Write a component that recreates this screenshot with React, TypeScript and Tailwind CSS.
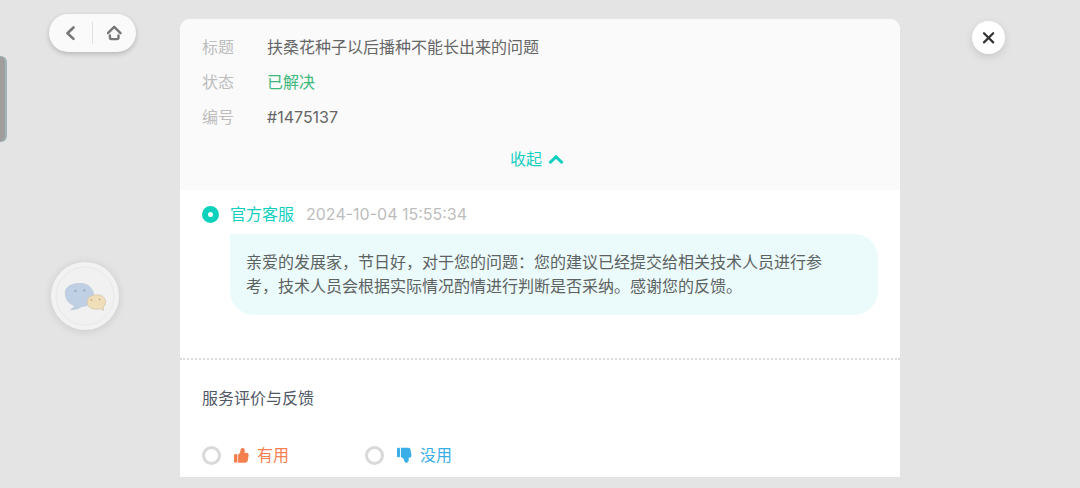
import { useState } from "react";

const ticket = {
  title: "扶桑花种子以后播种不能长出来的问题",
  status: "已解决",
  id: "#1475137",
};

function Row({ label, value, tone }: { label: string; value: string; tone: string }) {
  return (
    <div className="flex h-[35px] items-center">
      <dt className="w-[65px] shrink-0 text-[#bdbdbd]">{label}</dt>
      <dd className={tone}>{value}</dd>
    </div>
  );
}

function ThumbUpIcon() {
  return (
    <svg viewBox="0 0 16 16" className="size-4" fill="currentColor" aria-hidden="true">
      <rect x="1" y="7" width="3.400" height="8.800" rx="1.400" />
      <path d="M5.100 7.600C6.700 6.600 7.300 5 7.600 3 7.900 1.400 9 .8 10.100 1.100c1.400.4 2 1.600 1.700 3l-.3 1.600h1.900c1.500 0 2.400 1.100 2.200 2.500l-.7 4.900c-.2 1.600-1.300 2.700-2.900 2.700H5.100z" />
    </svg>
  );
}

function ThumbDownIcon() {
  return (
    <svg viewBox="0 0 16 16" className="size-4" fill="currentColor" aria-hidden="true">
      <rect x="1" y="0.800" width="3" height="9.400" rx="1" />
      <path d="M4.900.8h7.400c1.200 0 2 .7 2.200 1.800l.9 5.600c.2 1.400-.6 2.400-1.900 2.500l-.8.1v2.500c0 1.500-.9 2.400-2.300 2.400-1.300 0-2.100-.8-2.200-2.100C8.100 12.200 7.300 11 4.900 10.300z" />
    </svg>
  );
}

function Choice({ value, label, tone, down, checked, onChange }: {
  value: string;
  label: string;
  tone: string;
  down?: boolean;
  checked: boolean;
  onChange: (value: string) => void;
}) {
  return (
    <label className="flex w-[163px] cursor-pointer items-center">
      <input
        type="radio"
        name="rating"
        value={value}
        checked={checked}
        onChange={() => onChange(value)}
        className="size-[19px] appearance-none rounded-full border-3 border-[#d9d9d9] bg-white checked:border-[#0bd1bd]"
      />
      <span className={`ml-3 flex items-center gap-2 ${tone}`}>
        {down ? <ThumbDownIcon /> : <ThumbUpIcon />}
        {label}
      </span>
    </label>
  );
}

export default function App() {
  const [open, setOpen] = useState(true);
  const [rating, setRating] = useState("");

  return (
    <div className="relative grid min-h-screen grid-cols-[1fr_4fr_1fr] bg-[#e4e4e4] font-['Inter','Noto_Sans_CJK_SC',sans-serif] text-base leading-6 text-[#666]">
      <div className="absolute top-14 left-0 h-[86px] w-[7px] rounded-r-md border-y border-r-2 border-[#9fb4b8] bg-[#a09d9d]" />

      <aside className="flex flex-col items-start pt-[14px]">
        <nav className="ml-[49px] flex h-[38px] items-center rounded-full bg-[#fafafa] shadow-[0_2px_5px_rgba(0,0,0,0.2)]">
          <button type="button" aria-label="返回" className="flex h-full w-[43px] items-center justify-center">
            <svg viewBox="0 0 16 16" className="size-4" fill="none" stroke="#777" strokeWidth="2.600" strokeLinecap="round" strokeLinejoin="round">
              <path d="M10.500 2.500 4.500 8.200l6 5.700" />
            </svg>
          </button>
          <span className="h-[22px] w-px bg-[#e0e0e0]" />
          <button type="button" aria-label="主页" className="flex h-full w-[43px] items-center justify-center">
            <svg viewBox="0 0 16 16" className="size-4" fill="none" stroke="#777" strokeWidth="2.400" strokeLinecap="round" strokeLinejoin="round">
              <path d="M.9 8.200 7.200 1.800 13.500 8.200" />
              <path d="M2.900 10.500v2q0 1.600 1.600 1.600h5.400q1.600 0 1.600-1.600v-2" />
            </svg>
          </button>
        </nav>
        <button type="button" aria-label="消息" className="mt-[210px] ml-[51px] flex size-[68px] items-center justify-center rounded-full bg-[#f2f2f2] shadow-[0_1px_8px_rgba(0,0,0,0.12)]">
          <svg viewBox="0 0 60 60" className="size-[60px]" aria-hidden="true">
            <circle cx="30" cy="30" r="29" fill="#f1f1f1" stroke="#e8e8e8" />
            <path d="M23.500 17.500C32 16.500 39 22 38.500 30c-.4 6.500-5.500 10.500-12 10.500-2.600 2.200-6.500 3.200-11 3.300 2-1.200 3.500-2.600 4.200-4.300C13.500 38 10.200 33 10.300 26.500c.2-6 6.200-8.500 13.200-9z" fill="#c0d0e4" stroke="#b6c6d8" strokeWidth=".7" />
            <path d="M41.500 28.800c5.600-.2 9.300 3.200 9 7.600-.2 2-.9 3.500-2.300 4.600l.5 3.500-3.200-1.700c-7 1.600-13.200-.8-13.400-6.500-.1-4.400 3.800-7.300 9.400-7.500z" fill="#f0deb9" stroke="#cfc3ad" strokeWidth=".7" />
            <g fill="#9bb4bd">
              <circle cx="20.500" cy="25" r="1.300" />
              <circle cx="29.300" cy="24.500" r="1.300" />
            </g>
            <g fill="#c3b796">
              <circle cx="36.500" cy="34" r="1.100" />
              <circle cx="44.500" cy="33.500" r="1.100" />
            </g>
          </svg>
        </button>
      </aside>

      <main className="mt-[19px] mb-[11px] overflow-hidden rounded-t-[10px] bg-white">
        <header className="bg-[#fafafa] px-[22px] pt-[10px] pb-[19px]">
          {open && (
            <dl>
              <Row label="标题" value={ticket.title} tone="text-[#666]" />
              <Row label="状态" value={ticket.status} tone="text-[#3cb87a]" />
              <Row label="编号" value={ticket.id} tone="text-[#666]" />
            </dl>
          )}
          <button type="button" onClick={() => setOpen(!open)} className="mx-auto mt-[13px] flex items-center gap-1.5 pr-1.5 text-[#11cfc0]">
            {open ? "收起" : "展开"}
            <svg viewBox="0 0 16 10" className={open ? "h-[10px] w-4" : "h-[10px] w-4 rotate-180"} fill="none" stroke="currentColor" strokeWidth="3" aria-hidden="true">
              <path d="M1.500 9 8 2.800 14.500 9" />
            </svg>
          </button>
        </header>

        <section className="px-[22px] pt-3 pb-[43px]">
          <div className="flex items-center">
            <span className="size-[17px] rounded-full border-6 border-[#0bd1bd] bg-white" />
            <h2 className="ml-[11px] text-[#11cfc0]">官方客服</h2>
            <time dateTime="2024-10-04T15:55:34" className="ml-3 text-[#bdbdbd]">2024-10-04 15:55:34</time>
          </div>
          <p className="mt-2 ml-7 rounded-[24px] rounded-tl-none bg-[#ebfafa] pt-4 pr-12 pb-[17px] pl-4 text-[#5c6262]">
            亲爱的发展家，节日好，对于您的问题：您的建议已经提交给相关技术人员进行参考，技术人员会根据实际情况酌情进行判断是否采纳。感谢您的反馈。
          </p>
        </section>

        <fieldset aria-labelledby="feedback" className="min-w-0 border-t-2 border-dotted border-[#dcdcdc] px-[22px] pb-[9px]">
          <h2 id="feedback" className="mt-[26px] text-[#505866]">服务评价与反馈</h2>
          <div className="mt-[33px] flex">
            <Choice value="useful" label="有用" tone="text-[#f5804f]" checked={rating === "useful"} onChange={setRating} />
            <Choice value="useless" label="没用" tone="text-[#3aaee6]" down checked={rating === "useless"} onChange={setRating} />
          </div>
        </fieldset>
      </main>

      <aside className="pt-[21px]">
        <button type="button" aria-label="关闭" className="ml-[72px] flex size-[33px] items-center justify-center rounded-full bg-white shadow-[0_3px_8px_rgba(0,0,0,0.12)]">
          <svg viewBox="0 0 14 14" className="size-[14px]" fill="none" stroke="#333" strokeWidth="2.200" strokeLinecap="round">
            <path d="m2 2.200 9.200 9.200m0-9.200L2 11.400" />
          </svg>
        </button>
      </aside>
    </div>
  );
}
